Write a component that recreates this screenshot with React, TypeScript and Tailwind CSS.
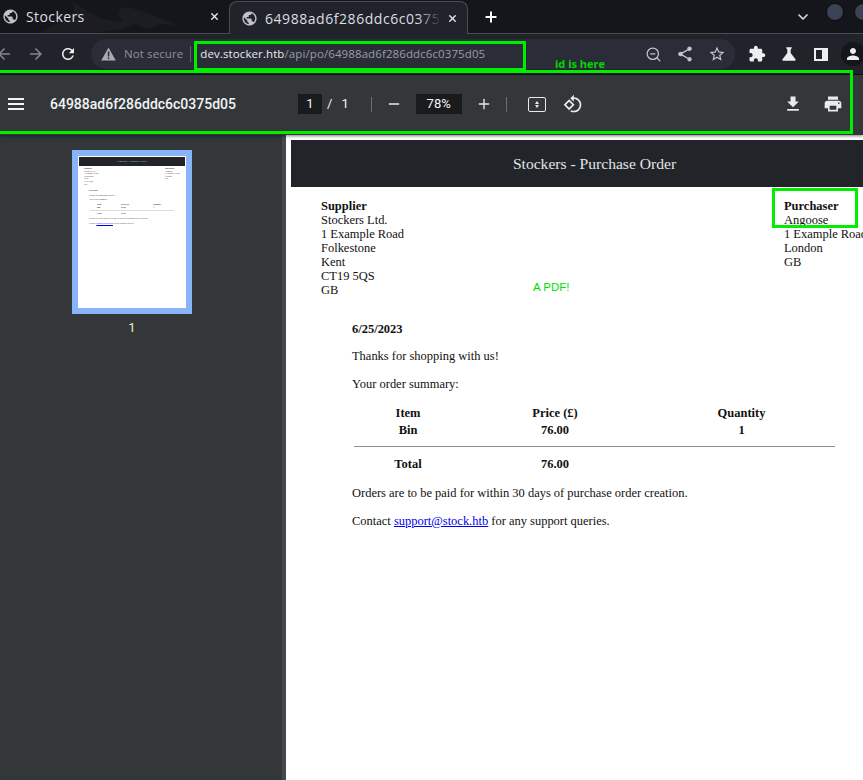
import React from "react";
import { X, Plus, ChevronDown, Minus, ZoomOut } from "lucide-react";

const serif = "font-['Liberation_Serif',serif]";
const chrome = "font-['Open_Sans',sans-serif]";

const P = {
  globe: "M12 2C6.48 2 2 6.48 2 12s4.48 10 10 10 10-4.48 10-10S17.52 2 12 2zm-1 17.93c-3.95-.49-7-3.85-7-7.93 0-.62.08-1.21.21-1.79L9 15v1c0 1.1.9 2 2 2v1.93zm6.9-2.54c-.26-.81-1-1.39-1.9-1.39h-1v-3c0-.55-.45-1-1-1H8v-2h2c.55 0 1-.45 1-1V7h2c1.1 0 2-.9 2-2v-.41c2.93 1.19 5 4.06 5 7.41 0 2.08-.8 3.97-2.1 5.39z",
  back: "M20 11H7.83l5.59-5.59L12 4l-8 8 8 8 1.41-1.41L7.83 13H20v-2z",
  fwd: "M12 4l-1.41 1.41L16.17 11H4v2h12.17l-5.58 5.59L12 20l8-8z",
  reload: "M17.65 6.35C16.2 4.9 14.21 4 12 4c-4.42 0-7.99 3.58-7.99 8s3.57 8 7.99 8c3.73 0 6.84-2.55 7.73-6h-2.08c-.82 2.33-3.04 4-5.65 4-3.31 0-6-2.69-6-6s2.69-6 6-6c1.66 0 3.14.69 4.22 1.78L13 11h7V4l-2.35 2.35z",
  share: "M18 16.08c-.76 0-1.44.3-1.96.77L8.91 12.7c.05-.23.09-.46.09-.7s-.04-.47-.09-.7l7.05-4.11c.54.5 1.25.81 2.04.81 1.66 0 3-1.34 3-3s-1.34-3-3-3-3 1.34-3 3c0 .24.04.47.09.7L8.04 9.81C7.5 9.31 6.79 9 6 9c-1.66 0-3 1.34-3 3s1.34 3 3 3c.79 0 1.5-.31 2.04-.81l7.12 4.16c-.05.21-.08.43-.08.65 0 1.61 1.31 2.92 2.92 2.92s2.92-1.31 2.92-2.92-1.31-2.92-2.92-2.92z",
  star: "M22 9.24l-7.19-.62L12 2 9.19 8.63 2 9.24l5.46 4.73L5.82 21 12 17.27 18.18 21l-1.63-7.03L22 9.24zM12 15.4l-3.76 2.27 1-4.28-3.32-2.88 4.38-.38L12 6.1l1.71 4.04 4.38.38-3.32 2.88 1 4.28L12 15.4z",
  puzzle: "M20.5 11H19V7c0-1.1-.9-2-2-2h-4V3.5C13 2.12 11.88 1 10.5 1S8 2.12 8 3.5V5H4c-1.1 0-1.99.9-1.99 2v3.8H3.5c1.49 0 2.7 1.21 2.7 2.7s-1.21 2.7-2.7 2.7H2V20c0 1.1.9 2 2 2h3.8v-1.5c0-1.49 1.21-2.7 2.7-2.7 1.49 0 2.7 1.21 2.7 2.7V22H17c1.1 0 2-.9 2-2v-4h1.5c1.38 0 2.5-1.12 2.5-2.5S21.88 11 20.5 11z",
  flask: "M19.8 18.4L14 10.67V6.5l1.35-1.69c.26-.33.03-.81-.39-.81H9.04c-.42 0-.65.48-.39.81L10 6.5v4.17L4.2 18.4c-.49.66-.02 1.6.8 1.6h14c.82 0 1.29-.94.8-1.6z",
  person: "M12 12c2.21 0 4-1.79 4-4s-1.79-4-4-4-4 1.79-4 4 1.79 4 4 4zm0 2c-2.67 0-8 1.34-8 4v2h16v-2c0-2.66-5.33-4-8-4z",
  rotate: "M7.34 6.41L.86 12.9l6.49 6.48 6.49-6.48-6.5-6.49zM3.69 12.9l3.66-3.66L11 12.9l-3.66 3.66-3.65-3.66zm15.67-6.26C17.61 4.88 15.3 4 13 4V.76L8.76 5 13 9.24V6c1.79 0 3.58.68 4.95 2.05 2.73 2.73 2.73 7.17 0 9.9C16.58 19.32 14.79 20 13 20c-.97 0-1.94-.21-2.84-.61l-1.49 1.49C10.02 21.62 11.51 22 13 22c2.3 0 4.61-.88 6.36-2.64 3.52-3.51 3.52-9.21 0-12.72z",
  download: "M19 9h-4V3H9v6H5l7 7 7-7zM5 18v2h14v-2H5z",
  print: "M19 8H5c-1.66 0-3 1.34-3 3v6h4v4h12v-4h4v-6c0-1.66-1.34-3-3-3zm-3 11H8v-5h8v5zm3-7c-.55 0-1-.45-1-1s.45-1 1-1 1 .45 1 1-.45 1-1 1zm-1-9H6v4h12V3z",
};

function Mi({ d, size, color, className }: { d: string; size: number; color: string; className?: string }) {
  return (
    <svg width={size} height={size} viewBox="0 0 24 24" fill={color} className={`shrink-0 ${className ?? ""}`}>
      <path d={d} />
    </svg>
  );
}

export default function App() {
  return (
    <div className="relative w-[863px] h-[780px] overflow-hidden bg-[#33373a] font-['Roboto',sans-serif]">
      {/* tab strip */}
      <div className="flex h-[34px] bg-[#15161c] relative">
        <svg className="absolute left-0 top-0" width="229" height="34" viewBox="0 0 229 34">
          <path d="M72 0 C84 10 100 22 124 22 C114 14 118 8 128 7 L150 14 L178 25 L160 24 L150 29 L134 24 C112 34 90 32 62 34 L38 34 C50 26 60 22 70 20 C76 14 74 6 72 0 Z" fill="#1c1d23" />
        </svg>
        <div className={`relative flex items-center w-[229px] shrink-0 pl-[2px] pr-[9px] border-b border-[#4a4c54] ${chrome}`}>
          <Mi d={P.globe} size={17} color="#bfc2c7" />
          <span className="ml-[7px] flex-1 text-[14px] tracking-[0.4px] text-[#dcdee2] whitespace-nowrap">Stockers</span>
          <X size={11} strokeWidth={3} className="shrink-0 text-[#e6e7ea]" />
        </div>
        <div className={`relative flex items-center w-[239px] h-[33px] mt-[1px] shrink-0 pl-[11px] pr-[9px] rounded-t-[8px] bg-[#21232b] border border-b-0 border-[#4a4c54] ${chrome}`}>
          <Mi d={P.globe} size={17} color="#bfc2c7" />
          <div className="relative ml-[7px] w-[176px] overflow-hidden">
            <span className="block text-[14px] tracking-[0.55px] text-[#dcdee2] whitespace-nowrap">64988ad6f286ddc6c0375d05</span>
            <div className="absolute right-0 top-0 bottom-0 w-[24px] bg-gradient-to-r from-transparent to-[#21232b]" />
          </div>
          <X size={11} strokeWidth={3} className="ml-auto shrink-0 text-[#e6e7ea]" />
        </div>
        <div className="relative flex-1 flex items-center border-b border-[#4a4c54]">
          <Plus size={16} strokeWidth={3} className="ml-[15px] shrink-0 text-white" />
          <ChevronDown size={16} strokeWidth={2.5} className="ml-[296px] shrink-0 text-[#d9dbdf]" />
          <div className="absolute left-[358px] top-[3px] w-[18px] h-[18px] rounded-full bg-[#3b4255] border border-[#0c0d10]" />
          <div className="absolute left-[386px] top-[3px] w-[18px] h-[18px] rounded-full bg-[#3b4255] border border-[#0c0d10]" />
        </div>
      </div>

      {/* browser toolbar */}
      <div className="flex items-center h-[40px] bg-[#21232b]">
        <Mi d={P.back} size={18} color="#84868c" className="ml-[-5px]" />
        <Mi d={P.fwd} size={18} color="#84868c" className="ml-[14px]" />
        <Mi d={P.reload} size={18} color="#eceef0" className="ml-[14px]" />
        <div className="ml-[14px] flex items-center h-[30px] w-[644px] rounded-full bg-[#2a2d38] shrink-0">
          <svg className="ml-[10px] shrink-0" width="15" height="14" viewBox="0 0 15 14"><path d="M7.5 0.5 L14.8 13.5 H0.2 Z" fill="#a9abb0"/><rect x="6.8" y="4.5" width="1.5" height="5" fill="#2a2d38"/><rect x="6.8" y="10.5" width="1.5" height="1.5" fill="#2a2d38"/></svg>
          <span className={`ml-[8px] text-[11.5px] tracking-[0.1px] text-[#8f9197] whitespace-nowrap ${chrome}`}>Not secure</span>
          <div className="ml-[7px] w-px h-[16px] bg-[#5e6068] shrink-0" />
          <span className={`ml-[9px] text-[11.5px] tracking-[0.1px] text-[#9a9ca2] whitespace-nowrap ${chrome}`}><span className="text-[#e8e9ec]">dev.stocker.htb</span>/api/po/64988ad6f286ddc6c0375d05</span>
          <div className="ml-auto mr-[9px] flex items-center gap-[14px]">
            <ZoomOut size={17} strokeWidth={1.8} className="shrink-0 text-[#c3c5c9]" />
            <Mi d={P.share} size={18} color="#c3c5c9" />
            <Mi d={P.star} size={18} color="#c3c5c9" />
          </div>
        </div>
        <Mi d={P.puzzle} size={18} color="#eceef0" className="ml-[13px]" />
        <Mi d={P.flask} size={20} color="#eceef0" className="ml-[13px]" />
        <div className="ml-[15px] w-[14px] h-[13px] border-[2px] border-[#eceef0] flex justify-end shrink-0"><div className="w-[4px] h-full bg-[#eceef0]" /></div>
        <div className="ml-[13px] w-[24px] h-[24px] rounded-full bg-[#15161c] flex items-center justify-center shrink-0"><Mi d={P.person} size={18} color="#eceef0" /></div>
      </div>

      {/* PDF toolbar */}
      <div className="flex items-center h-[61px] pb-[2px] bg-[#33373a] border-t border-[#0e0f12] shadow-[0_1px_3px_rgba(0,0,0,0.5)] relative">
        <div className="ml-[8px] w-[16px] flex flex-col gap-[3px] shrink-0">
          <div className="h-[2px] bg-[#f1f3f4]" /><div className="h-[2px] bg-[#f1f3f4]" /><div className="h-[2px] bg-[#f1f3f4]" />
        </div>
        <span className="ml-[26px] w-[248px] shrink-0 text-[14px] font-medium text-[#f1f3f4]">64988ad6f286ddc6c0375d05</span>
        <div className="w-[24px] h-[20px] shrink-0 bg-[#191b1c] flex items-center justify-center text-[13px] text-[#f1f3f4]">1</div>
        <span className="ml-[5px] text-[13px] text-[#f1f3f4]">/</span>
        <span className="ml-[9px] text-[13px] text-[#f1f3f4]">1</span>
        <div className="ml-[22px] w-px h-[15px] shrink-0 bg-[#6b6e71]" />
        <Minus size={16} strokeWidth={2} className="ml-[14px] shrink-0 text-[#e8eaed]" />
        <div className="ml-[14px] w-[46px] h-[20px] shrink-0 bg-[#191b1c] flex items-center justify-center text-[13px] text-[#f1f3f4]">78%</div>
        <Plus size={16} strokeWidth={2} className="ml-[14px] shrink-0 text-[#e8eaed]" />
        <div className="ml-[14px] w-px h-[15px] shrink-0 bg-[#6b6e71]" />
        <div className="ml-[21px] w-[18px] h-[15px] shrink-0 rounded-[2px] border-[1.5px] border-[#e8eaed] flex flex-col items-center justify-center gap-[1px]">
          <div className="w-0 h-0 border-x-[2.5px] border-x-transparent border-b-[3px] border-b-[#e8eaed]" />
          <div className="w-0 h-0 border-x-[2.5px] border-x-transparent border-t-[3px] border-t-[#e8eaed]" />
        </div>
        <Mi d={P.rotate} size={20} color="#e8eaed" className="ml-[17px]" />
        <div className="ml-auto flex items-center">
          <Mi d={P.download} size={20} color="#e8eaed" />
          <Mi d={P.print} size={20} color="#e8eaed" className="ml-[20px] mr-[20px]" />
        </div>
      </div>

      {/* body */}
      <div className="flex h-[645px]">
        <div className="w-[286px] shrink-0 bg-[#33373a] border-r-[4px] border-[#46494c] pt-[15px] flex flex-col items-center pr-[18px]">
          <div className="w-[120px] h-[164px] shrink-0 bg-[#8ab4f8] p-[6px]">
            <div className={`w-full h-full bg-white p-[1px] ${serif}`}>
              <div className="h-[9px] bg-[#212529] text-center text-[2.8px] leading-[9px] text-[#ccc]">Stockers - Purchase Order</div>
              <div className="relative h-[140px] text-[#333]">
                <div className="absolute left-[5px] top-[1px] text-[2.2px] leading-[2.6px]"><b>Supplier</b><br />Stockers Ltd.<br />1 Example Road<br />Folkestone<br />Kent<br />CT19 5QS<br />GB</div>
                <div className="absolute left-[86px] top-[1px] text-[2.2px] leading-[2.6px]"><b>Purchaser</b><br />Angoose<br />1 Example Road<br />London<br />GB</div>
                <div className="absolute left-[10px] top-[22px] text-[2.2px] leading-[4.5px]"><b>6/25/2023</b><br />Thanks for shopping with us!<br />Your order summary:</div>
                <div className="absolute left-[18px] top-[37px] text-[2.2px] leading-[3px]"><b>Item</b><br /><b>Bin</b></div>
                <div className="absolute left-[42px] top-[37px] text-[2.2px] leading-[3px]"><b>Price (£)</b><br /><b>76.00</b></div>
                <div className="absolute left-[74px] top-[37px] text-[2.2px] leading-[3px]"><b>Quantity</b><br /><b>1</b></div>
                <div className="absolute left-[11px] top-[44px] w-[84px] h-px bg-[#ddd]" />
                <div className="absolute left-[18px] top-[46px] text-[2.2px] leading-[3px]"><b>Total</b></div>
                <div className="absolute left-[42px] top-[46px] text-[2.2px] leading-[3px]"><b>76.00</b></div>
                <div className="absolute left-[10px] top-[49.5px] text-[2.2px] leading-[5px] whitespace-nowrap">Orders are to be paid for within 30 days of purchase order creation.<br />Contact <span className="text-[#0000ee] underline">support@stock.htb</span> for any support queries.</div>
              </div>
            </div>
          </div>
          <div className="mt-[6px] text-[13px] leading-[15px] text-[#f1e8c8]">1</div>
        </div>
        <div className="flex-1 bg-white overflow-hidden">
          <div className={`w-[612px] pl-[5px] pt-[5px] ${serif} text-[12.48px] leading-[14px] text-[#111]`}>
            <div className="h-[47px] bg-[#212529] flex items-center justify-center text-[15.6px] text-[#e4e5e6]">Stockers - Purchase Order</div>
            <div className="flex pl-[30px] pt-[12px]">
              <div className="w-[463px] shrink-0">
                <b>Supplier</b><br />Stockers Ltd.<br />1 Example Road<br />Folkestone<br />Kent<br />CT19 5QS<br />GB
              </div>
              <div className="whitespace-nowrap">
                <b>Purchaser</b><br />Angoose<br />1 Example Road<br />London<br />GB
              </div>
            </div>
            <div className="pl-[61px]">
              <p className="mt-[25px] font-bold">6/25/2023</p>
              <p className="mt-[13px]">Thanks for shopping with us!</p>
              <p className="mt-[14px]">Your order summary:</p>
              <div className="mt-[14px] ml-[2px] w-[481px]">
                <div className="grid grid-cols-[108px_186px_1fr] font-bold leading-[17px] text-center pb-[7px] border-b border-[#8f8f8f]">
                  <div>Item</div>
                  <div>Price (£)</div>
                  <div>Quantity</div>
                  <div>Bin</div>
                  <div>76.00</div>
                  <div>1</div>
                </div>
                <div className="grid grid-cols-[108px_186px_1fr] font-bold text-center leading-[17px] mt-[9px]">
                  <div>Total</div>
                  <div>76.00</div>
                </div>
              </div>
              <p className="mt-[13px]">Orders are to be paid for within 30 days of purchase order creation.</p>
              <p className="mt-[14px]">Contact <span className="text-[#0000ee] underline">support@stock.htb</span> for any support queries.</p>
            </div>
          </div>
        </div>
      </div>

      {/* annotations */}
      <div className="absolute left-[-10px] top-[70px] w-[863px] h-[64px] border-[3px] border-[#00ee00]" />
      <div className="absolute left-[194px] top-[41px] w-[332px] h-[30px] border-[3px] border-[#00ee00]" />
      <div className="absolute left-[772px] top-[188px] w-[86px] h-[40px] border-[3px] border-[#00ee00]" />
      <div className={`absolute left-[555px] top-[57px] text-[11px] leading-[13px] font-bold text-[#00d800] ${chrome}`}>id is here</div>
      <div className="absolute left-[533px] top-[281px] text-[11.5px] leading-[13px] text-[#00e000] font-['Liberation_Sans',sans-serif]">A PDF!</div>
    </div>
  );
}
